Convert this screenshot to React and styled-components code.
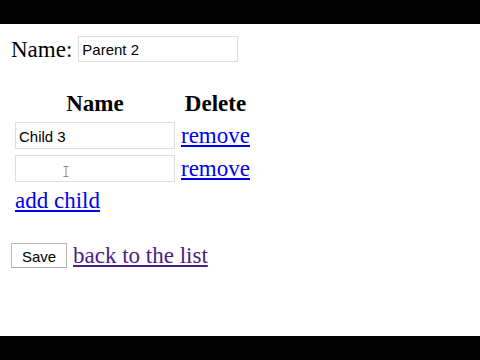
import React, { useState } from "react";
import styled, { createGlobalStyle } from "styled-components";

const GlobalStyle = createGlobalStyle`
  html, body {
    margin: 0;
    padding: 0;
    background: #000;
  }
`;

const Frame = styled.div`
  width: 480px;
  height: 360px;
  display: flex;
  flex-direction: column;
  background: #000;
`;

const Bar = styled.div`
  height: 24px;
  flex: none;
  background: #020202;
`;

const Screen = styled.main`
  flex: 1;
  background: #fff;
  padding: 12px 0 0 11px;
  font-family: "Liberation Serif", "Times New Roman", serif;
  font-size: 23px;
  line-height: 25px;
  color: #000;
`;

const NameRow = styled.div`
  display: flex;
  align-items: center;
  gap: 6px;
`;

const TextInput = styled.input`
  box-sizing: border-box;
  width: 160px;
  height: ${(p) => (p.$short ? "26px" : "27px")};
  margin: 0;
  padding: 1px 3px 0;
  border: 1px solid #dedede;
  border-radius: 0;
  background: #fff;
  font-family: "Liberation Sans", Arial, sans-serif;
  font-size: 15px;
  color: #000;
  outline: none;
`;

const Children = styled.div`
  margin: 29px 0 0 4px;
  display: grid;
  grid-template-columns: 160px max-content;
  column-gap: 6px;
  row-gap: 6px;
  align-items: center;
  justify-items: start;
`;

const Head = styled.div`
  justify-self: center;
  font-weight: bold;
`;

const Cell = styled.div`
  position: relative;
  display: flex;
`;

const Link = styled.a`
  color: ${(p) => (p.$visited ? "#4a1d86" : "#0000ee")};
  text-decoration: underline;
  text-underline-offset: 2px;
  cursor: pointer;
`;

const Caret = styled.svg`
  position: absolute;
  left: 48px;
  top: 11px;
  pointer-events: none;
`;

const AddLink = styled(Link)`
  grid-column: 1 / span 2;
`;

const Actions = styled.div`
  margin-top: 30px;
  display: flex;
  align-items: center;
  gap: 6px;
`;

const Button = styled.button`
  box-sizing: border-box;
  width: 56px;
  height: 25px;
  margin: 0;
  padding: 2px 0 0;
  border: 1px solid #b9b9b9;
  border-bottom-color: #a9a9a9;
  background: #fff;
  font-family: "Liberation Sans", Arial, sans-serif;
  font-size: 15px;
  color: #000;
`;

export default function App() {
  const [name, setName] = useState("Parent 2");
  const [kids, setKids] = useState(["Child 3", ""]);

  return (
    <Frame>
      <GlobalStyle />
      <Bar />
      <Screen>
        <NameRow>
          <span>Name:</span>
          <TextInput $short value={name} onChange={(e) => setName(e.target.value)} />
        </NameRow>

        <Children>
          <Head>Name</Head>
          <Head>Delete</Head>
          {kids.map((kid, i) => (
            <React.Fragment key={i}>
              <Cell>
                <TextInput
                  value={kid}
                  onChange={(e) => setKids(kids.map((k, j) => (j === i ? e.target.value : k)))}
                />
                {i === 1 && (
                  <Caret width="6" height="11" viewBox="0 0 6 11">
                    <path d="M0.5 0.5h5M3 0.5v10M0.5 10.5h5" stroke="#8a8a8a" strokeWidth="1" fill="none" />
                  </Caret>
                )}
              </Cell>
              <Link onClick={() => setKids(kids.filter((_, j) => j !== i))}>remove</Link>
            </React.Fragment>
          ))}
          <AddLink onClick={() => setKids([...kids, ""])}>add child</AddLink>
        </Children>

        <Actions>
          <Button>Save</Button>
          <Link $visited>back to the list</Link>
        </Actions>
      </Screen>
      <Bar />
    </Frame>
  );
}
